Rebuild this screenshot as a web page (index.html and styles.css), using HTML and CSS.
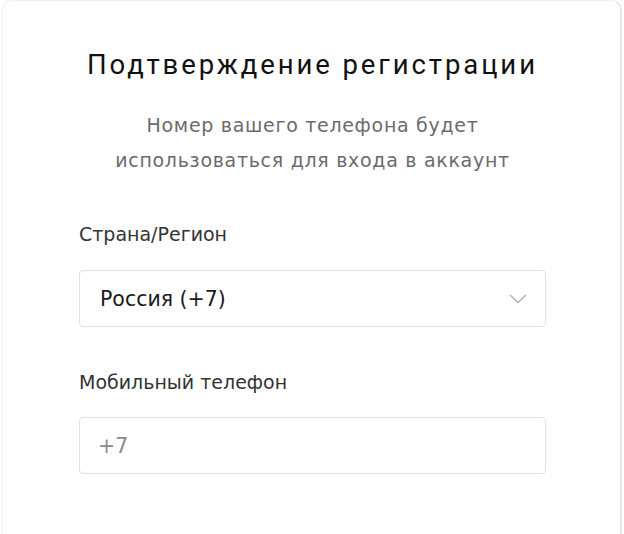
FILE: index.html
```html
<!DOCTYPE html>
<html lang="ru">
<head>
  <meta charset="UTF-8">
  <title>Подтверждение регистрации</title>
  <link rel="stylesheet" href="styles.css">
</head>
<body>

<div class="card">
  <h1 class="card-title">Подтверждение регистрации</h1>
  <p class="card-subtitle">Номер вашего телефона будет<br>использоваться для входа в аккаунт</p>

  <form class="reg-form">
    <label class="field-label" for="country">Страна/Регион</label>
    <div class="select-box" id="country">
      <span class="select-value">Россия (+7)</span>
      <svg class="chevron" width="18" height="10" viewBox="0 0 18 10">
        <path d="M1 1 L9 8.5 L17 1" fill="none" stroke="#b0b0b0" stroke-width="1.4"/>
      </svg>
    </div>

    <label class="field-label" for="phone">Мобильный телефон</label>
    <input class="text-input" type="tel" id="phone" placeholder="+7">
  </form>
</div>

</body>
</html>
```

FILE: styles.css
```css
body {
  margin: 0;
  background-color: #ffffff;
  font-family: "DejaVu Sans", "Liberation Sans", sans-serif;
}
.card {
  margin: 0 2px 0 2px;
  height: 560px;
  box-sizing: border-box;
  background-color: #fff;
  border: 1px solid #f0f0f0;
  border-right: 2px solid #e6e6e6;
  border-radius: 10px;
  padding: 44px 74px 0 76px;
  text-align: center;
}
.card-title {
  margin: 0;
  font-family: Roboto, "Liberation Sans", sans-serif;
  font-weight: 400;
  font-size: 27.5px;
  letter-spacing: 2.9px;
  line-height: 40px;
  color: #111;
}
.card-subtitle {
  margin: 23px 0 0;
  font-size: 19px;
  letter-spacing: 0.7px;
  line-height: 35px;
  color: #6b6b6b;
}
.reg-form {
  text-align: left;
  margin-top: 44px;
}
.field-label {
  display: block;
  font-size: 19px;
  line-height: 24px;
  color: #333;
}
.select-box {
  margin: 24px 0 43px;
  height: 55px;
  border: 1px solid #e2e2e2;
  border-radius: 4px;
  display: flex;
  align-items: center;
  justify-content: space-between;
  padding: 0 18px 0 20px;
}
.select-value {
  font-size: 20.5px;
  color: #1a1a1a;
}
.text-input {
  display: block;
  margin-top: 23px;
  width: 100%;
  height: 57px;
  box-sizing: border-box;
  border: 1px solid #e2e2e2;
  border-radius: 4px;
  padding: 0 18px;
  font-family: "DejaVu Sans", "Liberation Sans", sans-serif;
  font-size: 20.5px;
  color: #222;
}
.text-input::placeholder {
  color: #8a8a8a;
}
```
